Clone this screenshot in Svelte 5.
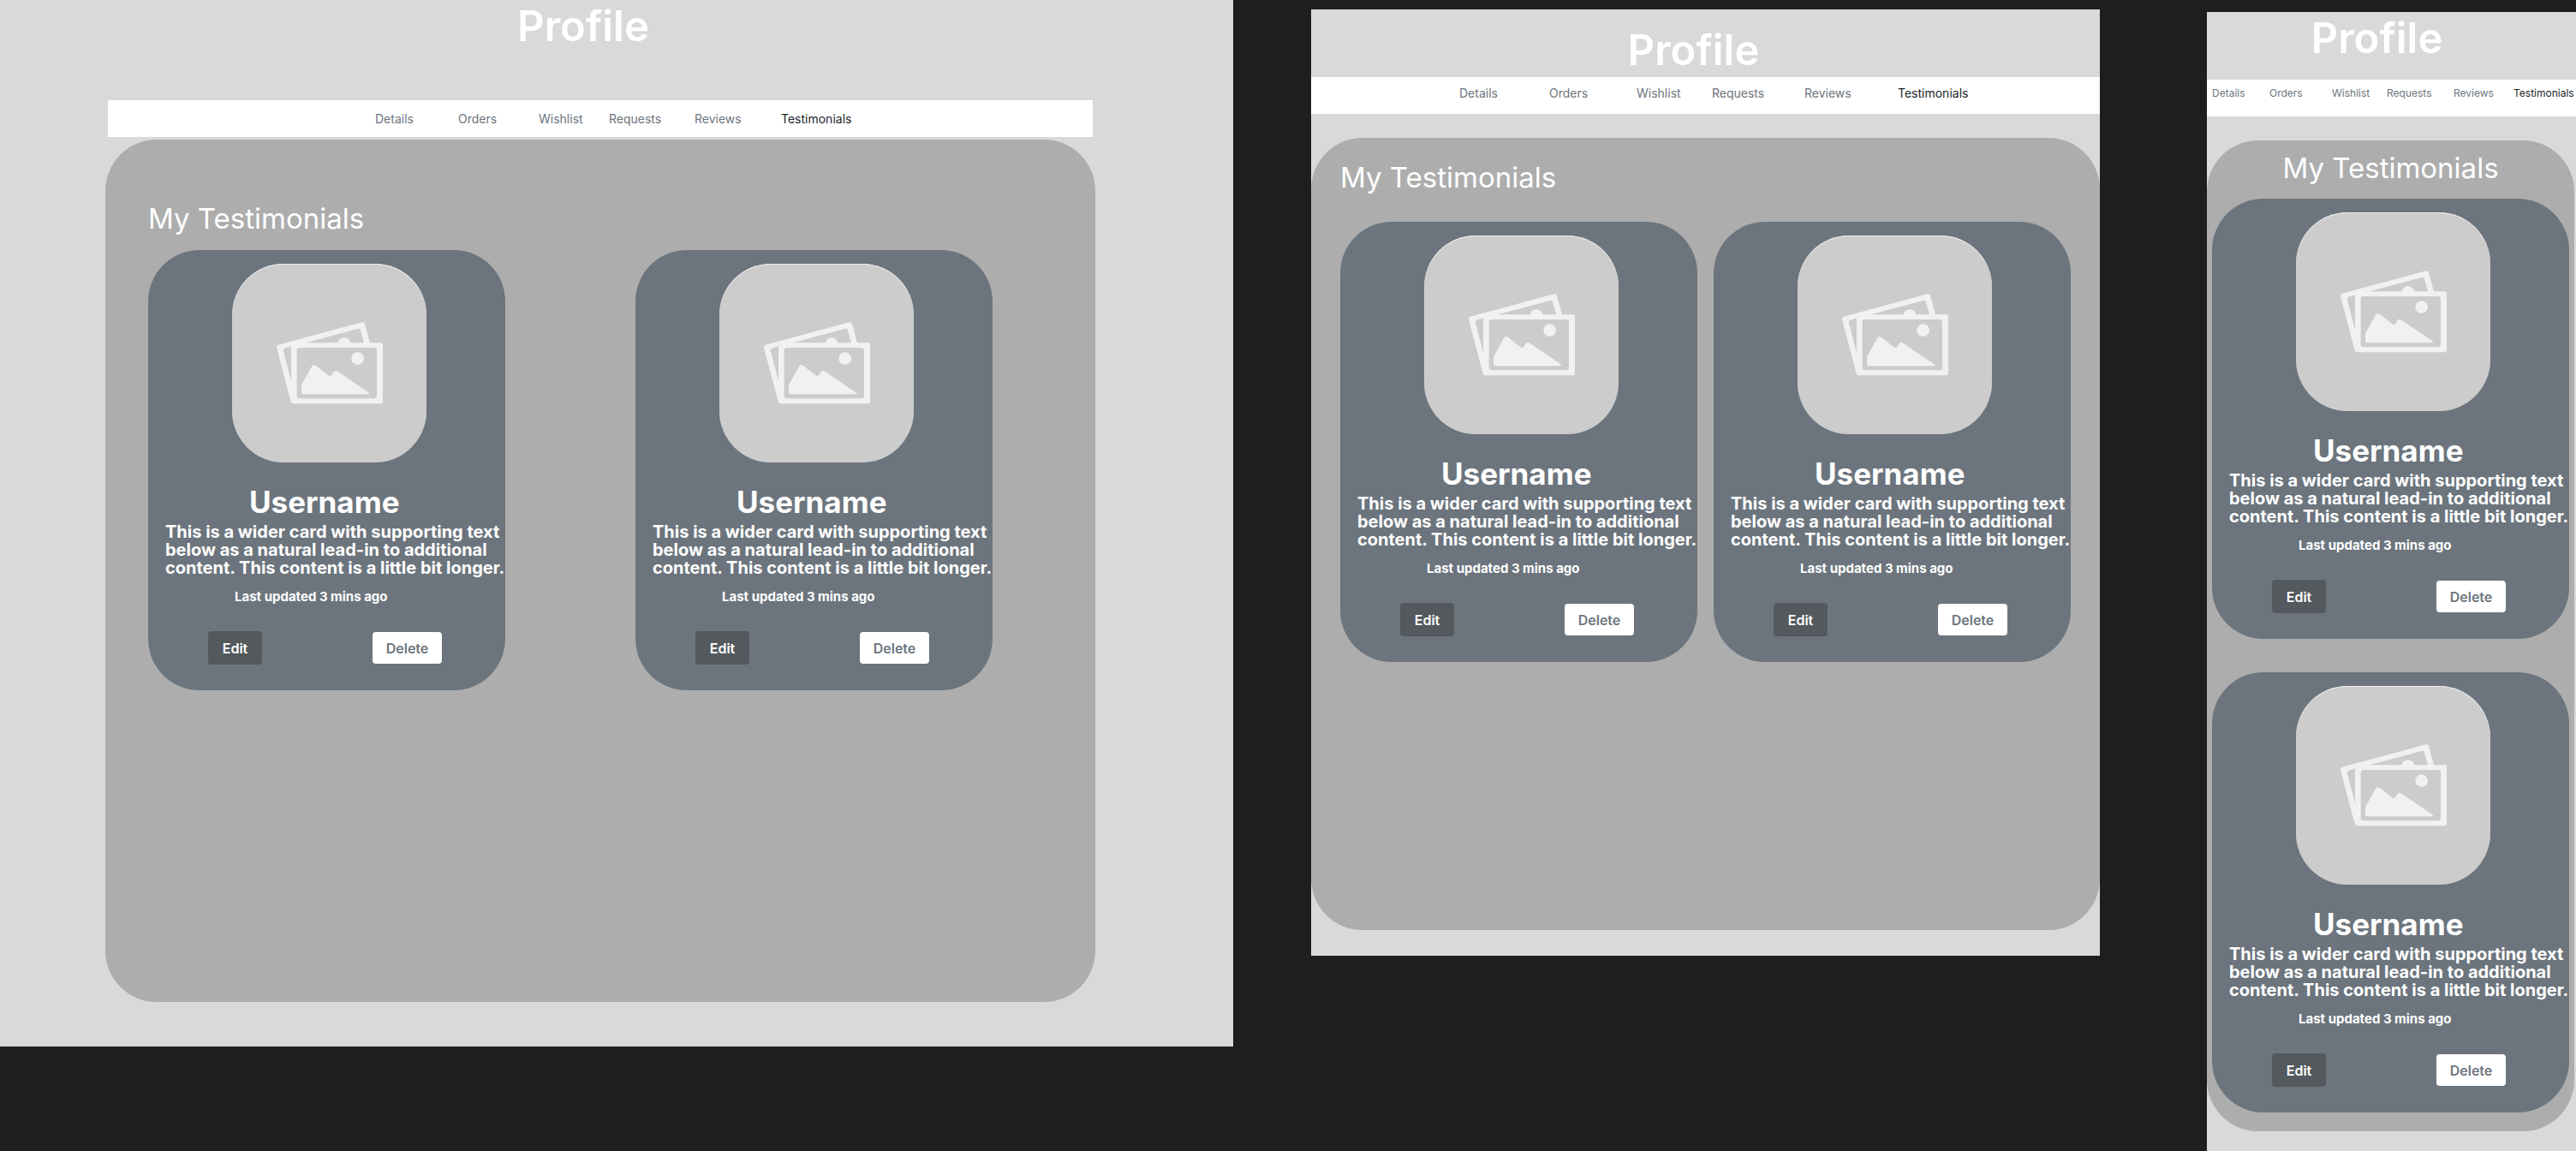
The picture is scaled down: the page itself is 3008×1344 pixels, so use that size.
<script>
  const tabs = ['Details', 'Orders', 'Wishlist', 'Requests', 'Reviews', 'Testimonials'];
  const screens = ['desktop', 'tablet', 'mobile'];
  const testimonials = [
    { id: 1, name: 'Username', updated: 'Last updated 3 mins ago' },
    { id: 2, name: 'Username', updated: 'Last updated 3 mins ago' }
  ];
</script>

<main class="board">
  {#each screens as screen}
    <section class="screen {screen}">
      <h1>Profile</h1>
      <nav aria-label="Profile sections">
        {#each tabs as tab}
          <a href="#{tab.toLowerCase()}" class:active={tab === 'Testimonials'}>{tab}</a>
        {/each}
      </nav>
      <div class="panel">
        <h2>My Testimonials</h2>
        <div class="cards">
          {#each testimonials as item (item.id)}
            <article class="card">
              <div class="photo">
                <svg viewBox="36 50 378 294" aria-hidden="true">
                  <path
                    fill="#f1f1f1"
                    fill-rule="evenodd"
                    d="M44 133L338 54Q346 52 348 60L366 126H404Q411 126 411 133V332Q411 339 404 339H98Q91 339 89 332L39 143Q37 135 44 133ZM140 126H254C259 102 292 102 298 126H345L333 82Q331 75 323 77ZM90 138L68 145Q60 148 63 156L90 260ZM120 143Q110 143 110 153V311Q110 321 120 321H380Q390 321 390 311V153Q390 143 380 143Z"
                  />
                  <circle cx="323" cy="181" r="22" fill="#f1f1f1" />
                  <path
                    fill="#f1f1f1"
                    d="M126 279Q126 273 130 266L162 209Q168 199 177 206L220 240Q227 246 233 237L238 229Q244 220 253 226L361 300Q366 305 359 306H134Q126 306 126 298Z"
                  />
                </svg>
              </div>
              <h3>{item.name}</h3>
              <p class="body">
                This is a wider card with supporting text<br />
                below as a natural lead-in to additional<br />
                content. This content is a little bit longer.
              </p>
              <p class="updated">{item.updated}</p>
              <div class="actions">
                <button type="button" class="edit">Edit</button>
                <button type="button" class="delete">Delete</button>
              </div>
            </article>
          {/each}
        </div>
      </div>
    </section>
  {/each}
</main>

<style>
  :global(body) {
    background: #1e1e1e;
  }

  .board {
    display: grid;
    grid-template-columns: 1440fr 91fr 921fr 125fr 431fr;
    align-items: start;
    min-height: 100vh;
    font-family: Inter, 'Liberation Sans', sans-serif;
    color: #fff;
  }

  .screen {
    box-sizing: border-box;
    min-width: 0;
    background: #d9d9d9;
  }

  h1,
  h2,
  h3,
  p {
    margin: 0;
  }

  h1 {
    font-size: 49px;
    line-height: 62px;
    font-weight: 600;
    text-align: center;
  }

  nav {
    display: grid;
    box-sizing: border-box;
    height: 43px;
    background: #fff;
    font-size: 14px;
    line-height: 20px;
  }

  nav a {
    color: #6c757d;
    text-decoration: none;
  }

  nav a:first-child {
    grid-column: 2;
  }

  nav a.active {
    color: #212529;
  }

  .panel {
    box-sizing: border-box;
    border-radius: 60px;
    background: #adadad;
  }

  h2 {
    font-size: 33px;
    line-height: 40px;
    font-weight: 400;
  }

  .cards {
    display: flex;
  }

  .card {
    box-sizing: border-box;
    flex: none;
    width: 417px;
    padding: 16px 0 30px;
    border-radius: 60px;
    background: #6c757d;
  }

  .photo {
    display: flex;
    align-items: center;
    justify-content: center;
    width: 227px;
    height: 232px;
    margin-left: 98px;
    border-radius: 60px;
    background: #ccc;
    box-shadow: inset 0 1px 0 #eee;
  }

  .photo svg {
    width: 126px;
    height: 98px;
  }

  h3 {
    margin: 24px 0 3px 118px;
    font-size: 35px;
    line-height: 44px;
    font-weight: 700;
  }

  .body {
    margin-left: 20px;
    font-size: 20px;
    line-height: 21px;
    font-weight: 700;
    white-space: nowrap;
  }

  .updated {
    margin: 14px 0 31px 101px;
    font-size: 15px;
    line-height: 18px;
    font-weight: 700;
  }

  .actions {
    display: flex;
    align-items: center;
    gap: 129px;
    margin-left: 70px;
  }

  button {
    padding: 0;
    border: 0;
    border-radius: 4px;
    font: 600 16px/20px Inter, 'Liberation Sans', sans-serif;
  }

  .edit {
    width: 63px;
    height: 39px;
    background: #54595d;
    color: #fff;
  }

  .delete {
    width: 81px;
    height: 37px;
    background: #fff;
    color: #6c757d;
  }

  .desktop {
    grid-column: 1;
    min-height: 1222px;
    padding: 0 161px 52px 123px;
  }

  .desktop h1 {
    padding-right: 40px;
    margin-bottom: 55px;
  }

  .desktop nav {
    grid-template-columns: 312fr 97fr 94fr 82fr 100fr 101fr 364fr;
    margin: 0 3px 3px;
    padding-top: 12px;
  }

  .desktop .panel {
    min-height: 1007px;
    padding: 72px 50px;
  }

  .desktop h2 {
    margin-bottom: 17px;
  }

  .desktop .cards {
    gap: 152px;
  }

  .tablet {
    grid-column: 3;
    min-height: 1105px;
    margin-top: 11px;
    padding-top: 17px;
  }

  .tablet h1 {
    padding-right: 28px;
  }

  .tablet nav {
    grid-template-columns: 173fr 105fr 102fr 88fr 108fr 109fr 236fr;
    margin-bottom: 28px;
    padding-top: 9px;
  }

  .tablet .panel {
    min-height: 925px;
    padding: 26px 34px;
  }

  .tablet h2 {
    margin-bottom: 32px;
  }

  .tablet .cards {
    gap: 19px;
  }

  .mobile {
    grid-column: 5;
    min-height: calc(100vh - 14px);
    margin-top: 14px;
  }

  .mobile h1 {
    padding-right: 34px;
    margin-bottom: 17px;
  }

  .mobile nav {
    grid-template-columns: 6fr 67fr 73fr 64fr 78fr 70fr 73fr;
    margin-bottom: 28px;
    padding-top: 6px;
    font-size: 12px;
  }

  .mobile .panel {
    margin-right: 2px;
    padding: 12px 6px 22px;
  }

  .mobile h2 {
    margin-bottom: 16px;
    text-align: center;
  }

  .mobile .cards {
    flex-direction: column;
    gap: 39px;
  }
</style>
